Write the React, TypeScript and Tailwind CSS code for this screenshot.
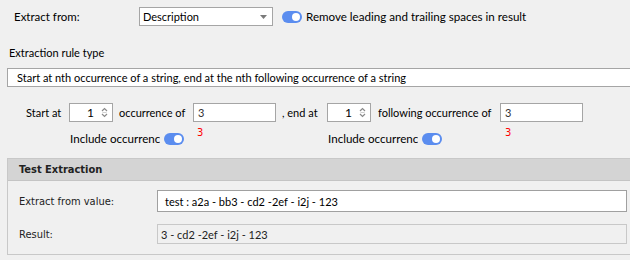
import React from 'react';

const Toggle = () => (
  <div className="w-[20px] h-[12px] rounded-full bg-[#5b8def] flex items-center justify-end pr-[2px] shrink-0">
    <div className="w-[8px] h-[8px] rounded-full bg-white" />
  </div>
);

const Spin = ({ value }: { value: string }) => (
  <div className="w-[44px] h-[19px] border border-[#a5a5a5] bg-white flex items-center justify-end pr-[4px] shrink-0">
    <span className="mr-[7px] text-[12px]">{value}</span>
    <svg width="7" height="13" viewBox="0 0 7 13">
      <path d="M1 5 L3.5 2.5 L6 5" fill="none" stroke="#8a8a8a" strokeWidth="1.2" />
      <path d="M1.5 6.5 L5.5 6.5" stroke="#d0d0d0" strokeWidth="1" />
      <path d="M1 8 L3.5 10.5 L6 8" fill="none" stroke="#8a8a8a" strokeWidth="1.2" />
    </svg>
  </div>
);

const TextBox = ({ value }: { value: string }) => (
  <div className="w-[83px] h-[19px] border border-[#a5a5a5] bg-white flex items-center pl-[4px] shrink-0 text-[11px] text-[#333]">
    {value}
  </div>
);

const Include = ({ red }: { red: number }) => (
  <div className="flex items-start">
    <div className="mt-[11px] flex items-center">
      <span className="w-[90px] overflow-hidden text-[11.6px]">Include occurrence</span>
      <div className="ml-[4px]">
        <Toggle />
      </div>
    </div>
    <span className="mt-[5px] text-[11px] text-[#ff0000] font-['DejaVu_Sans_Condensed',sans-serif]" style={{ marginLeft: red }}>
      3
    </span>
  </div>
);

export default function App() {
  return (
    <div className="w-[630px] h-[260px] bg-[#f0f0f0] overflow-hidden text-black text-[11px] leading-none font-['Segoe_UI','Lato',sans-serif]">
      {/* Extract from */}
      <div className="flex items-center pt-[7px] h-[26px]">
        <div className="w-[139px] pl-[14px] text-[11.5px]">Extract from:</div>
        <div className="w-[134px] h-[19px] border border-[#a5a5a5] bg-white flex items-center justify-between pl-[3px] pr-[5px] text-[11px]">
          <span>Description</span>
          <svg width="7" height="4" viewBox="0 0 7 4">
            <path d="M0 0 L7 0 L3.5 4 Z" fill="#7a7a7a" />
          </svg>
        </div>
        <div className="ml-[9px]">
          <Toggle />
        </div>
        <span className="ml-[4px] whitespace-nowrap text-[11.6px]">Remove leading and trailing spaces in result</span>
      </div>

      <div className="pl-[9px] mt-[21px]">Extraction rule type</div>

      <div className="ml-[7px] mt-[10px] w-[640px] h-[19px] border border-[#a5a5a5] bg-white flex items-center pl-[9px] whitespace-nowrap">
        Start at nth occurrence of a string, end at the nth following occurrence of a string
      </div>

      {/* Occurrence row */}
      <div className="flex items-center mt-[16px] h-[19px] whitespace-nowrap">
        <span className="ml-[26px] w-[43px]">Start at</span>
        <Spin value="1" />
        <span className="ml-[6px] w-[74px]">occurrence of</span>
        <TextBox value="3" />
        <span className="ml-[6px] w-[45px]">, end at</span>
        <Spin value="1" />
        <span className="ml-[7px] w-[122px]">following occurrence of</span>
        <TextBox value="3" />
      </div>

      <div className="flex h-[30px] whitespace-nowrap">
        <div className="w-[328px] pl-[70px]">
          <Include red={13} />
        </div>
        <Include red={63} />
      </div>

      {/* Test Extraction */}
      <div className="ml-[7px] mt-[6px] w-[640px] h-[97px] border border-[#c8c8c8] text-[11px] font-['Tahoma','DejaVu_Sans_Condensed','DejaVu_Sans',sans-serif] text-[#222]">
        <div className="h-[22px] bg-[#d4d4d4] border-b border-[#c4c4c4] flex items-center pl-[11px] font-bold">
          Test Extraction
        </div>
        <div className="flex items-center mt-[9px]">
          <span className="w-[149px] pl-[11px]">Extract from value:</span>
          <div className="w-[470px] h-[22px] border border-[#a0a0a0] bg-white flex items-center pl-[7px] font-['Segoe_UI','Lato',sans-serif] text-[11px] text-black">
            test : a2a - bb3 - cd2 -2ef - i2j - 123
          </div>
        </div>
        <div className="flex items-center mt-[12px]">
          <span className="w-[149px] pl-[11px]">Result:</span>
          <div className="w-[470px] h-[20px] border border-[#c8c8c8] flex items-center pl-[3px] font-['Segoe_UI','Lato',sans-serif] text-[11px]">
            3 - cd2 -2ef - i2j - 123
          </div>
        </div>
      </div>
    </div>
  );
}
